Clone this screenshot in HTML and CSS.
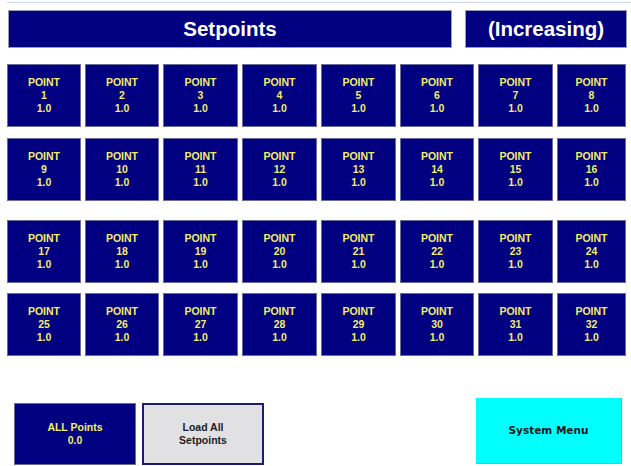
FILE: index.html
```html
<!DOCTYPE html>
<html>
<head>
<meta charset="utf-8">
<title>Setpoints</title>
<link rel="stylesheet" href="styles.css">
</head>
<body>
<div class="screen">
  <div class="rule"></div>
  <div class="header">
    <div class="title title-main">Setpoints</div>
    <div class="title title-mode">(Increasing)</div>
  </div>

  <div class="row row-1">
    <div class="tile">POINT<br>1<br>1.0</div>
    <div class="tile">POINT<br>2<br>1.0</div>
    <div class="tile">POINT<br>3<br>1.0</div>
    <div class="tile">POINT<br>4<br>1.0</div>
    <div class="tile">POINT<br>5<br>1.0</div>
    <div class="tile">POINT<br>6<br>1.0</div>
    <div class="tile">POINT<br>7<br>1.0</div>
    <div class="tile">POINT<br>8<br>1.0</div>
  </div>
  <div class="row row-2">
    <div class="tile">POINT<br>9<br>1.0</div>
    <div class="tile">POINT<br>10<br>1.0</div>
    <div class="tile">POINT<br>11<br>1.0</div>
    <div class="tile">POINT<br>12<br>1.0</div>
    <div class="tile">POINT<br>13<br>1.0</div>
    <div class="tile">POINT<br>14<br>1.0</div>
    <div class="tile">POINT<br>15<br>1.0</div>
    <div class="tile">POINT<br>16<br>1.0</div>
  </div>
  <div class="row row-3">
    <div class="tile">POINT<br>17<br>1.0</div>
    <div class="tile">POINT<br>18<br>1.0</div>
    <div class="tile">POINT<br>19<br>1.0</div>
    <div class="tile">POINT<br>20<br>1.0</div>
    <div class="tile">POINT<br>21<br>1.0</div>
    <div class="tile">POINT<br>22<br>1.0</div>
    <div class="tile">POINT<br>23<br>1.0</div>
    <div class="tile">POINT<br>24<br>1.0</div>
  </div>
  <div class="row row-4">
    <div class="tile">POINT<br>25<br>1.0</div>
    <div class="tile">POINT<br>26<br>1.0</div>
    <div class="tile">POINT<br>27<br>1.0</div>
    <div class="tile">POINT<br>28<br>1.0</div>
    <div class="tile">POINT<br>29<br>1.0</div>
    <div class="tile">POINT<br>30<br>1.0</div>
    <div class="tile">POINT<br>31<br>1.0</div>
    <div class="tile">POINT<br>32<br>1.0</div>
  </div>

  <div class="footer">
    <div class="btn btn-all">ALL Points<br>0.0</div>
    <div class="btn btn-load">Load All<br>Setpoints</div>
    <div class="btn btn-menu">System Menu</div>
  </div>
</div>
</body>
</html>
```

FILE: styles.css
```css
html, body {
  margin: 0;
  padding: 0;
  background: #ffffff;
}

.screen {
  width: 631px;
  height: 466px;
  overflow: hidden;
  font-family: "Liberation Sans", Arial, sans-serif;
  font-weight: bold;
}

.rule {
  height: 1px;
  margin: 2px 0 0 7px;
  background: #c9d9ec;
}

.header {
  display: flex;
  gap: 13px;
  margin: 7px 0 0 8px;
  height: 38px;
}

.title {
  box-sizing: border-box;
  height: 38px;
  background: #000080;
  border: 1px solid #9a9ab4;
  color: #ffffff;
  font-size: 20.5px;
  display: flex;
  align-items: center;
  justify-content: center;
}

.title-main { width: 444px; }
.title-mode { width: 162px; }

.row {
  display: grid;
  grid-template-columns: 74px 74px 75px 75px 75px 74px 75px 69px;
  column-gap: 4px;
  margin-left: 7px;
  height: 63px;
}

.row-1 { margin-top: 16px; }
.row-2 { margin-top: 11px; }
.row-3 { margin-top: 19px; }
.row-4 { margin-top: 10px; }

.tile {
  box-sizing: border-box;
  background: #000080;
  border: 1px solid #6c6c98;
  color: #f2ee6a;
  font-size: 10.5px;
  line-height: 13px;
  text-align: center;
  display: flex;
  align-items: center;
  justify-content: center;
}

.footer {
  display: flex;
  align-items: flex-start;
  margin-top: 42px;
  padding-left: 14px;
  gap: 6px;
}

.btn {
  box-sizing: border-box;
  display: flex;
  align-items: center;
  justify-content: center;
  text-align: center;
  font-size: 10.5px;
  line-height: 13px;
}

.btn-all {
  width: 122px;
  height: 62px;
  margin-top: 5px;
  background: #000080;
  border: 1px solid #6c6c98;
  color: #f2ee6a;
}

.btn-load {
  width: 122px;
  height: 62px;
  margin-top: 5px;
  background: #e1e1e3;
  border: 2px solid #1c1c78;
  color: #202020;
}

.btn-menu {
  width: 146px;
  height: 66px;
  margin-left: auto;
  margin-right: 9px;
  background: #00ffff;
  border-right: 1px solid #9aa4a4;
  border-bottom: 1px solid #9aa4a4;
  color: #161616;
  font-family: "DejaVu Sans", Verdana, sans-serif;
  font-size: 10.5px;
}
```
